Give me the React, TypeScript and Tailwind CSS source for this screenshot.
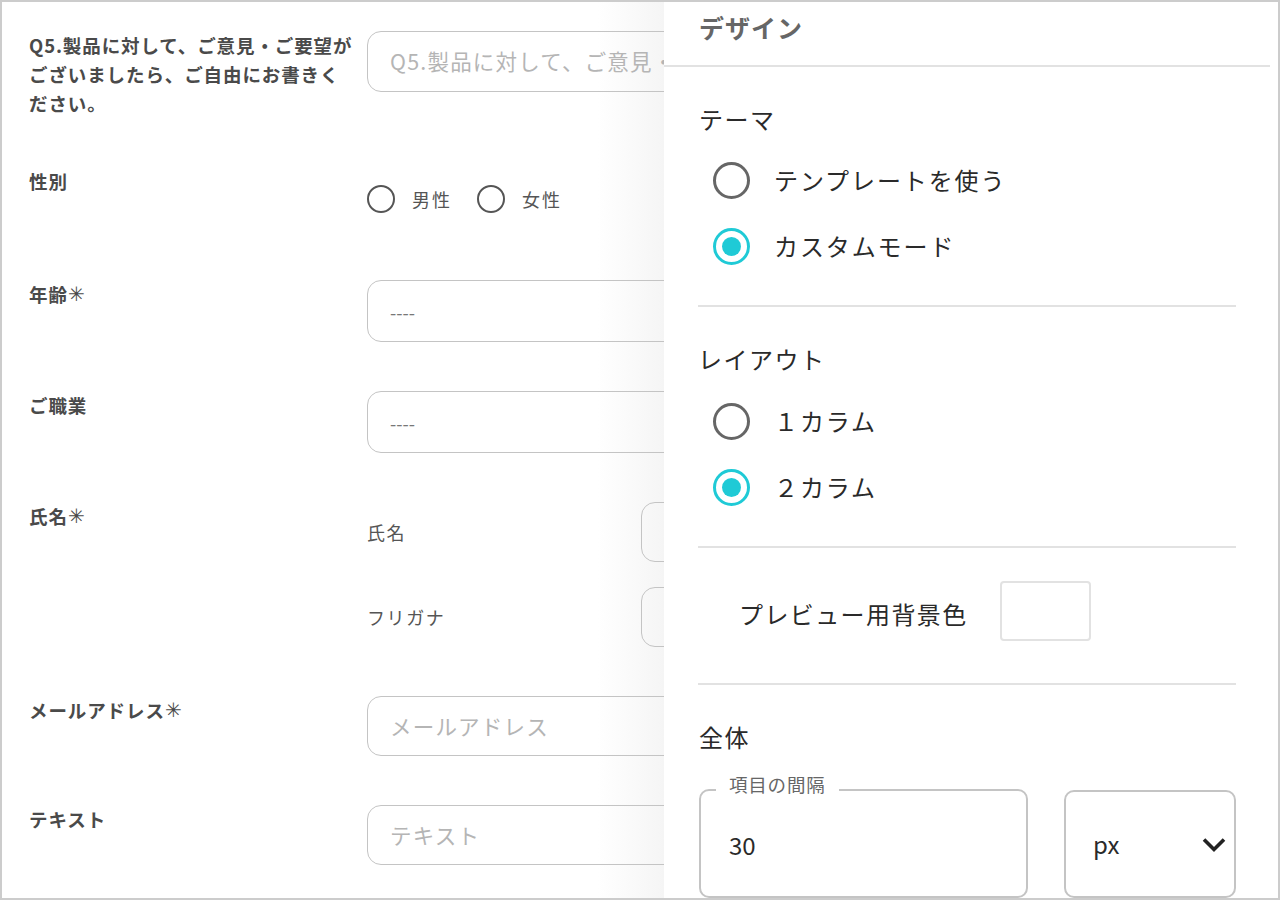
const font = { fontFamily: '"Noto Sans CJK JP", "Noto Sans", sans-serif' };

function Label({ children }: { children: React.ReactNode }) {
  return <div className="w-[338px] shrink-0 text-[18.5px] leading-[29px] font-bold tracking-[0.9px] text-[#4a4a4a] whitespace-nowrap">{children}</div>;
}

function Star() {
  return <span className="font-normal text-[20px] leading-none relative -top-[1px] tracking-normal">✳</span>;
}

function Box({ text, dim, h = "h-[62px]" }: { text: string; dim?: boolean; h?: string }) {
  return (
    <div className={`${h} w-[340px] shrink-0 rounded-[14px] border border-[#c4c4c4] pl-[22px] flex items-center whitespace-nowrap overflow-hidden ${dim ? "text-[21.5px] tracking-[1.2px] text-[#b5b5b5]" : "text-[18px] text-[#777] pt-[3px]"}`}>
      {text}
    </div>
  );
}

function BigRadio({ on, label }: { on?: boolean; label: string }) {
  return (
    <div className="flex items-center h-[38px]">
      <div className={`ml-[15px] w-[37px] h-[37px] rounded-full border-[3px] flex items-center justify-center ${on ? "border-[#1fcad6]" : "border-[#666]"}`}>
        {on && <div className="w-[19px] h-[19px] rounded-full bg-[#1fcad6]" />}
      </div>
      <div className="ml-[24px] text-[24px] leading-[38px] tracking-[1.9px] text-[#2a2a2a]">{label}</div>
    </div>
  );
}

function SmallRadio({ label }: { label: string }) {
  return (
    <div className="flex items-center">
      <div className="w-[28px] h-[28px] rounded-full border-2 border-[#555]" />
      <div className="ml-[17px] w-[45px] text-[18px] tracking-[2px] text-[#555] whitespace-nowrap">{label}</div>
    </div>
  );
}

function Divider() {
  return <div className="h-[2px] bg-[#e2e2e2] w-[538px]" />;
}

export default function App() {
  return (
    <div style={font} className="relative w-[1280px] h-[900px] overflow-hidden border-2 border-[#ccc] bg-white flex">
      <div className="relative w-[662px] shrink-0 overflow-hidden bg-gradient-to-r from-white from-[90%] to-[#f5f5f5]">
        <div className="pl-[27px] pt-[29px]">
          <div className="flex h-[125px]">
            <Label>
              <div>Q5.製品に対して、ご意見・ご要望が<br />ございましたら、ご自由にお書きく<br />ださい。</div>
            </Label>
            <Box text="Q5.製品に対して、ご意見・ご要望がございましたら" dim h="h-[61px]" />
          </div>
          <div className="flex h-[124px]">
            <Label><div className="pt-[11px]">性別</div></Label>
            <div className="flex items-start pt-[29px] gap-[20px]">
              <SmallRadio label="男性" />
              <SmallRadio label="女性" />
            </div>
          </div>
          <div className="flex h-[111px]">
            <Label><div>年齢<Star /></div></Label>
            <Box text="----" />
          </div>
          <div className="flex h-[111px]">
            <Label><div>ご職業</div></Label>
            <Box text="----" />
          </div>
          <div className="flex h-[194px]">
            <Label><div>氏名<Star /></div></Label>
            <div className="flex flex-col gap-[25px]">
              <div className="flex items-center h-[60px]">
                <div className="w-[274px] text-[18px] tracking-[1.6px] text-[#555]">氏名</div>
                <div className="w-[100px] h-[60px] rounded-[14px] border border-[#c4c4c4]" />
              </div>
              <div className="flex items-center h-[60px]">
                <div className="w-[274px] text-[18px] tracking-[1.6px] text-[#555]">フリガナ</div>
                <div className="w-[100px] h-[60px] rounded-[14px] border border-[#c4c4c4]" />
              </div>
            </div>
          </div>
          <div className="flex h-[109px]">
            <Label><div>メールアドレス<Star /></div></Label>
            <Box text="メールアドレス" dim h="h-[60px]" />
          </div>
          <div className="flex">
            <Label><div>テキスト</div></Label>
            <Box text="テキスト" dim h="h-[60px]" />
          </div>
        </div>
      </div>

      <div className="relative flex-1 bg-white">
        <div className="h-[65px] w-[606px] border-b-2 border-[#e2e2e2] pl-[35px]">
          <div className="text-[25px] leading-[50px] font-bold tracking-[1px] text-[#666]">デザイン</div>
        </div>
        <div className="pl-[34px]">
          <div className="pt-[34px] text-[24px] leading-[36px] tracking-[1.5px] text-[#2a2a2a] pl-[1px]">テーマ</div>
          <div className="pt-[24px] flex flex-col gap-[28px]">
            <BigRadio label="テンプレートを使う" />
            <BigRadio label="カスタムモード" on />
          </div>
          <div className="pt-[40px]"><Divider /></div>
          <div className="pt-[34px] text-[24px] leading-[36px] tracking-[1.5px] text-[#2a2a2a]">レイアウト</div>
          <div className="pt-[25px] flex flex-col gap-[28px]">
            <BigRadio label="１カラム" />
            <BigRadio label="２カラム" on />
          </div>
          <div className="pt-[40px]"><Divider /></div>
          <div className="flex items-start pt-[33px] pl-[41px]">
            <div className="pt-[15px] text-[24px] leading-[36px] tracking-[1.4px] text-[#2a2a2a] w-[261px] whitespace-nowrap">プレビュー用背景色</div>
            <div className="w-[91px] h-[60px] rounded-[4px] border-2 border-[#e2e2e2]" />
          </div>
          <div className="pt-[42px]"><Divider /></div>
          <div className="pt-[34px] text-[24px] leading-[36px] tracking-[1.5px] text-[#2a2a2a] pl-[1px]">全体</div>
          <div className="mt-[23px] flex gap-[36px] pl-[1px]">
            <fieldset className="w-[329px] h-[120px] rounded-[10px] border-2 border-[#c4c4c4] pl-[15px] m-0 p-0 flex-none">
              <legend className="px-[13px] text-[18.5px] leading-[24px] tracking-[0.8px] text-[#666]">
                <span className="relative -top-[6px]">項目の間隔</span>
              </legend>
              <div className="pl-[13px] pt-[25px] text-[24px] leading-[36px] text-[#2a2a2a]">30</div>
            </fieldset>
            <div className="mt-[12px] relative w-[172px] h-[108px] rounded-[10px] border-2 border-[#c4c4c4] pl-[27px] pt-[34px] text-[24px] leading-[36px] text-[#2a2a2a]">
              px
              <svg className="absolute right-[8px] top-[45px]" width="24" height="16" viewBox="0 0 24 16" fill="none" stroke="#222" strokeWidth="3.6">
                <path d="M2 2.5 L12 12.5 L22 2.5" />
              </svg>
            </div>
          </div>
        </div>
      </div>
    </div>
  );
}
